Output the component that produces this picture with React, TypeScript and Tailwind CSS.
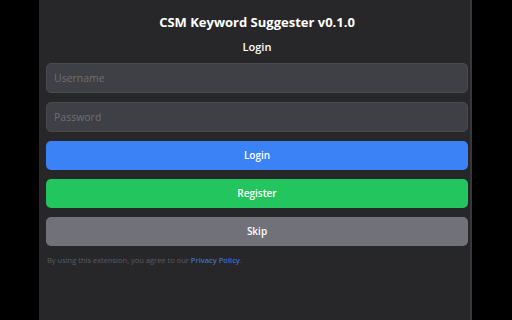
export default function App() {
  return (
    <div className="h-screen w-full bg-black font-['Open_Sans',sans-serif]">
      <div className="ml-[39px] flex h-full w-[433px] flex-col bg-[#27272a] pl-[7px] pr-[2px] pt-[13px] border-r-2 border-[#38383c]">
        {/* Header */}
        <h1 className="text-center text-[13px] font-bold leading-[18px] text-white">
          CSM Keyword Suggester v0.1.0
        </h1>
        <h2 className="mt-[8px] text-center text-[11px] font-semibold leading-[16px] text-white">
          Login
        </h2>

        {/* Form */}
        <div className="mt-[8px] flex flex-col gap-[9px]">
          <input
            type="text"
            placeholder="Username"
            className="h-[30px] w-full rounded-[5px] border border-[#4a4a51] bg-[#3f3f46] px-[7px] text-[10.5px] text-white placeholder:text-[#6e6e76] outline-none"
          />
          <input
            type="password"
            placeholder="Password"
            className="h-[30px] w-full rounded-[5px] border border-[#4a4a51] bg-[#3f3f46] px-[7px] text-[10.5px] text-white placeholder:text-[#6e6e76] outline-none"
          />
          <button className="h-[29px] w-full rounded-[5px] bg-[#3b82f6] text-[10px] font-semibold text-white">
            Login
          </button>
          <button className="h-[29px] w-full rounded-[5px] bg-[#22c55e] text-[10px] font-semibold text-white">
            Register
          </button>
          <button className="h-[29px] w-full rounded-[5px] bg-[#71717a] text-[10px] font-semibold text-white">
            Skip
          </button>
        </div>

        <p className="mt-[8px] px-[1px] text-[7.5px] leading-[12px] text-[#5b5b62]">
          By using this extension, you agree to our{" "}
          <a href="#" className="font-semibold text-[#3b6fd0]">
            Privacy Policy
          </a>
          .
        </p>
      </div>
    </div>
  );
}
